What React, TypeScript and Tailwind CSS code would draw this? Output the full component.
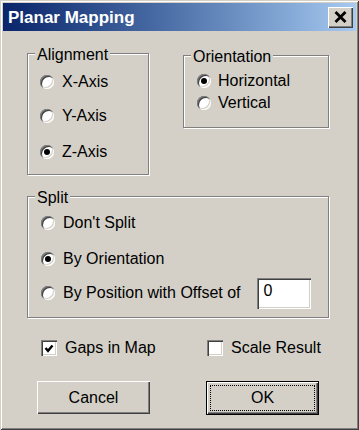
import React from "react";

const font = { fontFamily: '"Liberation Sans", Arial, sans-serif' };

function Radio({ checked }: { checked?: boolean }) {
  return (
    <div className="w-[14px] h-[14px] shrink-0 rounded-full bg-white flex items-center justify-center shadow-[inset_1px_1px_0_#808080,inset_2px_2px_0_#404040,inset_-1px_-1px_0_#ffffff,inset_-2px_-2px_0_#d4d0c8]">
      {checked && <div className="w-[6px] h-[6px] rounded-full bg-black" />}
    </div>
  );
}

function RadioRow({ label, checked, gap = "gap-[8px]", children }: { label: string; checked?: boolean; gap?: string; children?: React.ReactNode }) {
  return (
    <div className={`flex items-center h-[20px] ${gap}`}>
      <Radio checked={checked} />
      <span className="leading-[20px] text-black whitespace-nowrap">{label}</span>
      {children}
    </div>
  );
}

function Checkbox({ checked }: { checked?: boolean }) {
  return (
    <div className="w-[16px] h-[16px] shrink-0 bg-white flex items-center justify-center shadow-[inset_1px_1px_0_#808080,inset_2px_2px_0_#404040,inset_-1px_-1px_0_#ffffff,inset_-2px_-2px_0_#d4d0c8]">
      {checked && (
        <svg width="10" height="9" viewBox="0 0 10 9" className="-ml-[1px]">
          <path d="M1.5 4 L4 6.8 L8.5 1.5" fill="none" stroke="#000" strokeWidth="2.4" />
        </svg>
      )}
    </div>
  );
}

function Group({ label, className, children }: { label: string; className: string; children: React.ReactNode }) {
  return (
    <div className={`relative border border-[#808080] shadow-[inset_1px_1px_0_#ffffff,1px_1px_0_#ffffff] ${className}`}>
      <span className="absolute -top-[9px] left-[7px] px-[2px] bg-[#d4d0c8] leading-[20px] text-black">{label}</span>
      {children}
    </div>
  );
}

export default function App() {
  return (
    <div
      style={font}
      className="w-[359px] h-[430px] bg-[#d4d0c8] text-[16px] text-black flex flex-col shadow-[inset_1px_1px_0_#d4d0c8,inset_-1px_-1px_0_#404040,inset_2px_2px_0_#ffffff,inset_-2px_-2px_0_#808080]"
    >
      {/* Title bar */}
      <div className="mx-[3px] mt-[3px] h-[28px] flex items-center justify-between bg-gradient-to-r from-[#0a246a] to-[#a6caf0]">
        <span className="pl-[5px] text-white font-bold text-[17px] leading-none">Planar Mapping</span>
        <div className="mr-[3px] w-[25px] h-[21px] bg-[#d4d0c8] flex items-center justify-center shadow-[inset_1px_1px_0_#ffffff,inset_-1px_-1px_0_#404040,inset_-2px_-2px_0_#808080]">
          <svg width="13" height="12" viewBox="0 0 13 12">
            <path d="M1.5 1 L11.5 11 M11.5 1 L1.5 11" stroke="#000" strokeWidth="2.8" />
          </svg>
        </div>
      </div>

      <div className="pl-[27px] pt-[22px] flex flex-col">
        {/* Top row */}
        <div className="flex items-start">
          <Group label="Alignment" className="w-[122px] h-[122px] pl-[12px]">
            <div className="mt-[18px]">
              <RadioRow label="X-Axis" />
            </div>
            <div className="mt-[14px]">
              <RadioRow label="Y-Axis" />
            </div>
            <div className="mt-[16px]">
              <RadioRow label="Z-Axis" checked />
            </div>
          </Group>

          <Group label="Orientation" className="ml-[34px] mt-[2px] w-[146px] h-[73px] pl-[13px]">
            <div className="mt-[15px]">
              <RadioRow label="Horizontal" checked gap="gap-[7px]" />
            </div>
            <div className="mt-[2px]">
              <RadioRow label="Vertical" gap="gap-[7px]" />
            </div>
          </Group>
        </div>

        {/* Split */}
        <Group label="Split" className="mt-[21px] w-[302px] h-[122px] pl-[13px]">
          <div className="mt-[16px]">
            <RadioRow label="Don't Split" />
          </div>
          <div className="mt-[16px]">
            <RadioRow label="By Orientation" checked />
          </div>
          <div className="mt-[14px]">
            <RadioRow label="By Position with Offset of">
              <div className="ml-[8px] shrink-0 w-[54px] h-[31px] bg-white pl-[7px] pt-[3px] leading-[20px] shadow-[inset_1px_1px_0_#808080,inset_2px_2px_0_#404040,inset_-1px_-1px_0_#ffffff,inset_-2px_-2px_0_#d4d0c8]">
                0
              </div>
            </RadioRow>
          </div>
        </Group>

        {/* Checkboxes */}
        <div className="mt-[20px] pl-[14px] flex items-center">
          <div className="w-[166px] flex items-center gap-[8px]">
            <Checkbox checked />
            <span className="leading-[20px]">Gaps in Map</span>
          </div>
          <div className="flex items-center gap-[8px]">
            <Checkbox />
            <span className="leading-[20px]">Scale Result</span>
          </div>
        </div>

        {/* Buttons */}
        <div className="mt-[23px] pl-[10px] flex items-start gap-[56px]">
          <button className="w-[113px] h-[33px] bg-[#d4d0c8] leading-[20px] shadow-[inset_1px_1px_0_#ffffff,inset_-1px_-1px_0_#404040,inset_-2px_-2px_0_#808080]">
            Cancel
          </button>
          <button className="w-[113px] h-[34px] bg-[#d4d0c8] border border-black p-[3px] shadow-[inset_1px_1px_0_#ffffff,inset_-1px_-1px_0_#404040,inset_-2px_-2px_0_#808080]">
            <div className="w-full h-full flex items-center justify-center border border-dotted border-black leading-[20px]">
              OK
            </div>
          </button>
        </div>
      </div>
    </div>
  );
}
